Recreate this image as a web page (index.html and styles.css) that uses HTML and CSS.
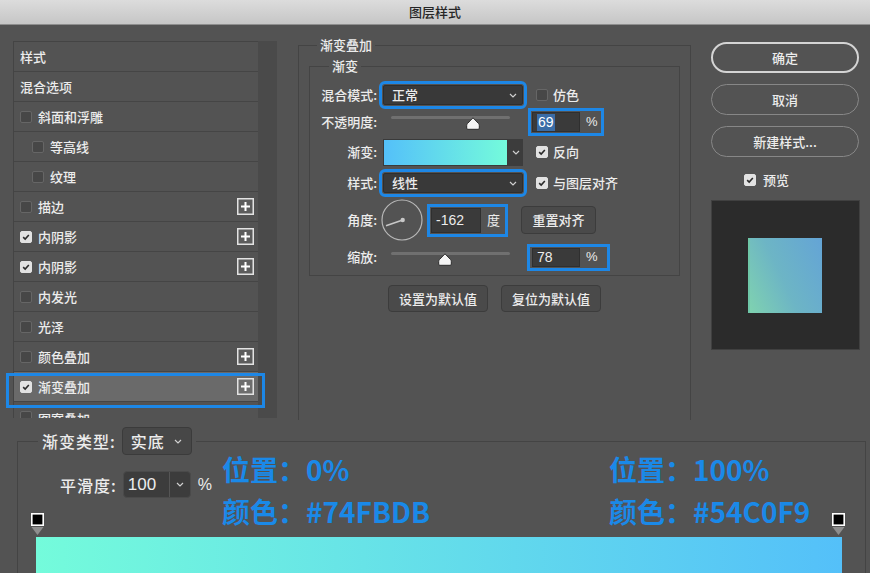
FILE: index.html
```html
<!DOCTYPE html>
<html lang="zh-CN">
<head>
<meta charset="utf-8">
<title>图层样式</title>
<link rel="stylesheet" href="styles.css">
</head>
<body>
<div class="titlebar">图层样式</div>
<div class="main">
  <div class="left">
    <div class="list">
      <div class="row"><span class="t">样式</span></div>
      <div class="row"><span class="t">混合选项</span></div>
      <div class="row"><span class="cb"></span><span class="t">斜面和浮雕</span></div>
      <div class="row sub"><span class="cb"></span><span class="t">等高线</span></div>
      <div class="row sub"><span class="cb"></span><span class="t">纹理</span></div>
      <div class="row"><span class="cb"></span><span class="t">描边</span><svg class="plus" viewBox="0 0 17 17"><rect x="0.75" y="0.75" width="15.5" height="15.5" fill="#5c5c5c" stroke="#e2e2e2" stroke-width="1.5"/><path d="M8.5 4v9M4 8.5h9" stroke="#fff" stroke-width="2"/></svg></div>
      <div class="row"><span class="cb on"><svg viewBox="0 0 12 12"><path d="M2.6 6.2L5 8.5L9.4 3.5" fill="none" stroke="#2a2a2a" stroke-width="1.9"/></svg></span><span class="t">内阴影</span><svg class="plus" viewBox="0 0 17 17"><rect x="0.75" y="0.75" width="15.5" height="15.5" fill="#5c5c5c" stroke="#e2e2e2" stroke-width="1.5"/><path d="M8.5 4v9M4 8.5h9" stroke="#fff" stroke-width="2"/></svg></div>
      <div class="row"><span class="cb on"><svg viewBox="0 0 12 12"><path d="M2.6 6.2L5 8.5L9.4 3.5" fill="none" stroke="#2a2a2a" stroke-width="1.9"/></svg></span><span class="t">内阴影</span><svg class="plus" viewBox="0 0 17 17"><rect x="0.75" y="0.75" width="15.5" height="15.5" fill="#5c5c5c" stroke="#e2e2e2" stroke-width="1.5"/><path d="M8.5 4v9M4 8.5h9" stroke="#fff" stroke-width="2"/></svg></div>
      <div class="row"><span class="cb"></span><span class="t">内发光</span></div>
      <div class="row"><span class="cb"></span><span class="t">光泽</span></div>
      <div class="row"><span class="cb"></span><span class="t">颜色叠加</span><svg class="plus" viewBox="0 0 17 17"><rect x="0.75" y="0.75" width="15.5" height="15.5" fill="#5c5c5c" stroke="#e2e2e2" stroke-width="1.5"/><path d="M8.5 4v9M4 8.5h9" stroke="#fff" stroke-width="2"/></svg></div>
      <div class="row sel"><span class="cb on"><svg viewBox="0 0 12 12"><path d="M2.6 6.2L5 8.5L9.4 3.5" fill="none" stroke="#2a2a2a" stroke-width="1.9"/></svg></span><span class="t">渐变叠加</span><svg class="plus" viewBox="0 0 17 17"><rect x="0.75" y="0.75" width="15.5" height="15.5" fill="#6e6e6e" stroke="#e2e2e2" stroke-width="1.5"/><path d="M8.5 4v9M4 8.5h9" stroke="#fff" stroke-width="2"/></svg></div>
      <div class="row last"><span class="cb"></span><span class="t">图案叠加</span></div>
    </div>
    <div class="scroll"></div>
  </div>
  <div class="mark-sel"></div>

  <div class="center">
    <fieldset class="outer">
      <legend>渐变叠加</legend>
      <fieldset class="inner">
        <legend>渐变</legend>
        <div class="frow r28">
          <span class="lbl">混合模式:</span>
          <div class="dd hl"><span>正常</span><svg class="chev" viewBox="0 0 8 5"><path d="M1 1l3 3 3-3" fill="none" stroke="#d0d0d0" stroke-width="1.2"/></svg></div>
          <label class="side"><span class="cb"></span>仿色</label>
        </div>
        <div class="frow r26">
          <span class="lbl">不透明度:</span>
          <div class="slider"><div class="track"><svg class="thumb" style="left:69%" viewBox="0 0 14 13"><path d="M7 0.8L12.6 6.6Q13.3 7.4 13.3 8.6V11.2Q13.3 12.3 12.2 12.3H1.8Q0.7 12.3 0.7 11.2V8.6Q0.7 7.4 1.4 6.6Z" fill="#f4f4f4" stroke="#2b2b2b" stroke-width="1"/></svg></div></div>
          <div class="numwrap hl"><span class="inp"><span class="selt">69</span></span><span class="pct">%</span></div>
        </div>
        <div class="frow r34">
          <span class="lbl">渐变:</span>
          <div class="gsw"></div>
          <div class="garrow"><svg class="chev" viewBox="0 0 8 5"><path d="M1 1l3 3 3-3" fill="none" stroke="#d0d0d0" stroke-width="1.2"/></svg></div>
          <label class="side"><span class="cb on"><svg viewBox="0 0 12 12"><path d="M2.6 6.2L5 8.5L9.4 3.5" fill="none" stroke="#2a2a2a" stroke-width="1.9"/></svg></span>反向</label>
        </div>
        <div class="frow r28">
          <span class="lbl">样式:</span>
          <div class="dd hl"><span>线性</span><svg class="chev" viewBox="0 0 8 5"><path d="M1 1l3 3 3-3" fill="none" stroke="#d0d0d0" stroke-width="1.2"/></svg></div>
          <label class="side"><span class="cb on"><svg viewBox="0 0 12 12"><path d="M2.6 6.2L5 8.5L9.4 3.5" fill="none" stroke="#2a2a2a" stroke-width="1.9"/></svg></span>与图层对齐</label>
        </div>
        <div class="frow r46">
          <span class="lbl">角度:</span>
          <svg class="dial" viewBox="0 0 42 42"><circle cx="21" cy="21" r="20" fill="none" stroke="#b8b8b8" stroke-width="1.2"/><path d="M21.7 21L5 26.7" stroke="#c8c8c8" stroke-width="1.6"/><circle cx="21.7" cy="21" r="2.2" fill="#c8c8c8"/></svg>
          <div class="numwrap ang hl"><span class="inp">-162</span><span class="pct">度</span></div>
          <div class="btn reset">重置对齐</div>
        </div>
        <div class="frow r28">
          <span class="lbl">缩放:</span>
          <div class="slider sc"><div class="track"><svg class="thumb" style="left:45%" viewBox="0 0 14 13"><path d="M7 0.8L12.6 6.6Q13.3 7.4 13.3 8.6V11.2Q13.3 12.3 12.2 12.3H1.8Q0.7 12.3 0.7 11.2V8.6Q0.7 7.4 1.4 6.6Z" fill="#f4f4f4" stroke="#2b2b2b" stroke-width="1"/></svg></div></div>
          <div class="numwrap scale hl"><span class="inp">78</span><span class="pct">%</span></div>
        </div>
      </fieldset>
      <div class="btns">
        <div class="btn">设置为默认值</div>
        <div class="btn">复位为默认值</div>
      </div>
    </fieldset>
  </div>

  <div class="right">
    <div class="pill primary">确定</div>
    <div class="pill">取消</div>
    <div class="pill">新建样式...</div>
    <label class="pvcheck"><span class="cb on"><svg viewBox="0 0 12 12"><path d="M2.6 6.2L5 8.5L9.4 3.5" fill="none" stroke="#2a2a2a" stroke-width="1.9"/></svg></span>预览</label>
    <div class="pv"><div class="pv-sq"></div></div>
  </div>
</div>

<div class="bwrap">
  <fieldset class="bgroup">
    <legend class="blg"><span>渐变类型:</span><span class="dd2"><span>实底</span><svg class="chev" viewBox="0 0 8 5"><path d="M1 1l3 3 3-3" fill="none" stroke="#d0d0d0" stroke-width="1.2"/></svg></span></legend>
    <div class="smooth">
      <span class="slbl">平滑度:</span>
      <span class="combo"><span class="cnum">100</span><span class="carr"><svg class="chev" viewBox="0 0 8 5"><path d="M1 1l3 3 3-3" fill="none" stroke="#d0d0d0" stroke-width="1.2"/></svg></span></span>
      <span class="spct">%</span>
    </div>
    <div class="stops">
      <svg class="stop" viewBox="0 0 13 22"><rect x="0.8" y="0.8" width="11.4" height="11.4" fill="#000" stroke="#fff" stroke-width="1.6"/><path d="M0.5 14H12.5L6.5 22Z" fill="#8e8e8e"/></svg>
      <svg class="stop" viewBox="0 0 13 22"><rect x="0.8" y="0.8" width="11.4" height="11.4" fill="#000" stroke="#fff" stroke-width="1.6"/><path d="M0.5 14H12.5L6.5 22Z" fill="#8e8e8e"/></svg>
    </div>
    <div class="gbar"></div>
  </fieldset>
  <div class="anno a1">位置：0%</div>
  <div class="anno a2">颜色：#74FBDB</div>
  <div class="anno a3">位置：100%</div>
  <div class="anno a4">颜色：#54C0F9</div>
</div>
</body>
</html>
```

FILE: styles.css
```css
* { box-sizing: border-box; }
html, body { margin: 0; padding: 0; }
body {
  width: 870px;
  height: 573px;
  overflow: hidden;
  background: #535353;
  font-family: "Noto Sans CJK SC", "Noto Sans", sans-serif;
  font-size: 13px;
  font-weight: 500;
  line-height: 16px;
  color: #ececec;
}
svg { display: block; }

.titlebar {
  height: 25px;
  line-height: 24px;
  text-align: center;
  color: #262626;
  font-size: 13px;
  background: linear-gradient(#dcdcdc, #c6c6c6);
  border-bottom: 1px solid #8e8e8e;
}

.main {
  position: relative;
  display: flex;
  align-items: flex-start;
  height: 395px;
  overflow: hidden;
}

/* left list */
.left {
  display: flex;
  margin: 16px 0 0 13px;
  height: 377px;
  overflow: hidden;
}
.list {
  width: 245px;
  border-top: 1px solid #444;
  border-left: 1px solid #444;
}
.row {
  height: 30px;
  display: flex;
  align-items: center;
  padding: 0 4px 0 6px;
  border-bottom: 1px solid #454545;
}
.row.last { align-items: flex-start; padding-top: 9px; }
.row.sub { padding-left: 18px; }
.row.sel { background: #6a6a6a; }
.row .t { flex: 1; }
.row .cb { margin-right: 6px; }
.plus { width: 17px; height: 17px; }
.scroll { width: 19px; background: #4a4a4a; }

.cb {
  display: inline-block;
  flex: none;
  width: 12px;
  height: 12px;
  border-radius: 2px;
  background: #474747;
  border: 1px solid #666;
}
.cb.on { background: #e2e2e2; border-color: #e2e2e2; }
.cb svg { width: 10px; height: 10px; }

.mark-sel {
  position: absolute;
  left: 6px;
  top: 348px;
  width: 259px;
  height: 35px;
  border: 3px solid #1d87e6;
}

/* center */
.center { margin: 12px 0 0 21px; width: 393px; }
fieldset { margin: 0; min-width: 0; }
.outer {
  border: 1px solid #444;
  padding: 0 10px;
  height: 420px;
}
.outer > legend { margin-left: 8px; padding: 0 3px; line-height: 16px; }
.inner {
  border: 1px solid #444;
  margin: 5px 0 0;
  padding: 7px 0 4px;
}
.inner > legend { margin-left: 19px; padding: 0 3px; line-height: 16px; }

.frow { display: flex; align-items: center; }
.r26 { height: 26px; }
.r28 { height: 28px; }
.r34 { height: 34px; }
.r46 { height: 46px; }
.lbl { width: 67px; text-align: right; margin-right: 6px; flex: none; }

.hl { outline: 3px solid #1d87e6; outline-offset: 1px; }

.dd {
  width: 140px;
  height: 20px;
  background: #393939;
  border: 1px solid #2e2e2e;
  border-radius: 2px;
  display: flex;
  align-items: center;
  justify-content: space-between;
  padding: 0 5px 0 8px;
}
.chev { width: 8px; height: 5px; }

.side { margin-left: 13px; display: flex; align-items: center; }
.side .cb { margin-right: 5px; }

.slider { position: relative; width: 140px; height: 26px; flex: none; }
.slider.sc { height: 28px; }
.track {
  position: absolute;
  left: 8px;
  right: 13px;
  top: 7px;
  height: 3px;
  border-radius: 2px;
  background: #707070;
}
.slider.sc .track { top: 9px; }
.thumb {
  position: absolute;
  top: 1px;
  width: 14px;
  height: 13px;
  margin-left: -7px;
}

.numwrap {
  margin-left: 9px;
  display: flex;
  align-items: center;
  height: 20px;
  padding-right: 2px;
}
.inp {
  display: flex;
  align-items: center;
  width: 48px;
  height: 20px;
  background: #3a3a3a;
  border: 1px solid #2f2f2f;
  padding-left: 4px;
  font-family: "Liberation Sans", "Noto Sans", sans-serif;
  font-weight: 400;
  font-size: 14px;
}
.selt { background: #3a6ca6; color: #fff; padding: 0 1px; line-height: 17px; }
.pct { margin-left: 6px; font-family: "Liberation Sans", "Noto Sans CJK SC", sans-serif; font-weight: 400; }
.numwrap.ang { margin-left: 8px; height: 25px; padding-right: 4px; }
.numwrap.ang .inp { width: 50px; height: 25px; }
.numwrap.ang .pct { font-family: "Noto Sans CJK SC", sans-serif; }
.numwrap.scale { margin-left: 8px; height: 19px; padding: 0 8px 0 1px; }
.numwrap.scale .inp { height: 19px; }

.gsw {
  width: 125px;
  height: 27px;
  background: linear-gradient(to right, #54c0f9, #74fbdb);
  border: 1px solid #3a3a3a;
}
.garrow {
  width: 15px;
  height: 27px;
  background: #3c3c3c;
  display: flex;
  align-items: center;
  justify-content: center;
}
.dial { width: 42px; height: 42px; margin-left: -2px; }

.btn {
  height: 27px;
  width: 100px;
  background: #4a4a4a;
  border: 1px solid #3c3c3c;
  border-radius: 4px;
  display: flex;
  align-items: center;
  justify-content: center;
}
.btn.reset { width: 75px; height: 28px; margin-left: 17px; }
.btns {
  display: flex;
  justify-content: center;
  gap: 13px;
  margin-top: 9px;
}

/* right */
.right {
  margin: 17px 0 0 19px;
  width: 150px;
  display: flex;
  flex-direction: column;
  align-items: center;
}
.pill {
  width: 148px;
  height: 31px;
  border: 1px solid #878787;
  border-radius: 16px;
  display: flex;
  align-items: center;
  justify-content: center;
  margin-bottom: 11px;
}
.pill.primary { border: 2px solid #d4d4d4; }
.pvcheck {
  align-self: flex-start;
  margin: 4px 0 0 34px;
  display: flex;
  align-items: center;
  height: 16px;
}
.pvcheck .cb { margin-right: 7px; }
.pv {
  margin-top: 12px;
  width: 149px;
  height: 150px;
  background: #2b2b2b;
  border: 1px solid #404040;
  display: flex;
  align-items: center;
  justify-content: center;
}
.pv-sq {
  width: 74px;
  height: 75px;
  background: linear-gradient(65deg, #7fd2b0, #6db5c5 45%, #64a4d6);
  border-left: 2px solid #6fc7a8;
}

/* bottom */
.bwrap {
  position: relative;
  height: 153px;
  overflow: hidden;
  padding: 7px 4px 0 17px;
}
.bgroup {
  border: 1px solid #444;
  border-bottom: none;
  padding: 0;
  height: 146px;
  font-size: 16px;
  letter-spacing: 1px;
}
.blg {
  margin-left: 20px;
  padding: 0 4px;
  display: flex;
  align-items: center;
  height: 28px;
  line-height: 20px;
}
.dd2 {
  margin-left: 6px;
  width: 70px;
  height: 28px;
  background: #474747;
  border: 1px solid #3b3b3b;
  border-radius: 4px;
  display: flex;
  align-items: center;
  justify-content: space-between;
  padding: 0 9px 0 8px;
}
.smooth {
  display: flex;
  align-items: center;
  margin: 16px 0 0 42px;
  height: 27px;
  line-height: 20px;
}
.slbl { margin-right: 6px; }
.combo {
  display: flex;
  height: 27px;
  width: 68px;
  background: #3c3c3c;
  border: 1px solid #4a4a4a;
  border-radius: 4px;
}
.cnum {
  width: 46px;
  display: flex;
  align-items: center;
  padding-left: 4px;
  font-family: "Liberation Sans", "Noto Sans", sans-serif;
  font-weight: 400;
  font-size: 17px;
  letter-spacing: 0;
  border-right: 1px solid #555;
}
.carr { flex: 1; display: flex; align-items: center; justify-content: center; }
.spct { margin-left: 7px; font-family: "Liberation Sans", sans-serif; font-weight: 400; font-size: 16px; }

.stops {
  display: flex;
  justify-content: space-between;
  margin: 15px 20px 0 13px;
  height: 22px;
}
.stop { width: 13px; height: 22px; }
.gbar {
  margin: 2px 23px 0 18px;
  height: 36px;
  background: linear-gradient(to right, #74fbdb, #54c0f9);
}

.anno {
  position: absolute;
  color: #1a89e8;
  font-weight: bold;
  font-size: 28px;
  line-height: 34px;
  white-space: nowrap;
}
.a1 { left: 222px; top: 32px; }
.a2 { left: 222px; top: 74px; }
.a3 { left: 609px; top: 32px; }
.a4 { left: 609px; top: 74px; }
```
